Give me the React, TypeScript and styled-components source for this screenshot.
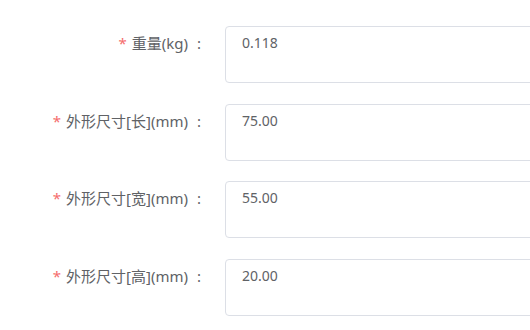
import React from 'react';
import styled, { createGlobalStyle } from 'styled-components';

const GlobalStyle = createGlobalStyle`
  html, body {
    margin: 0;
    padding: 0;
    background: #ffffff;
    overflow: hidden;
  }
  body {
    font-family: "Noto Sans", "Noto Sans CJK SC", sans-serif;
    font-size: 14px;
    color: #606266;
  }
`;

interface Field {
  label: string;
  value: string;
}

const fields: Field[] = [
  { label: '重量(kg)', value: '0.118' },
  { label: '外形尺寸[长](mm)', value: '75.00' },
  { label: '外形尺寸[宽](mm)', value: '55.00' },
  { label: '外形尺寸[高](mm)', value: '20.00' },
];

const App = () => {
  return (
    <>
      <GlobalStyle />
      <Form>
        {fields.map((f) => (
          <Row key={f.label}>
            <Label>
              <Required>*</Required>
              {f.label}
              <Colon>:</Colon>
            </Label>
            <Control>
              <TextArea defaultValue={f.value} rows={2} readOnly />
            </Control>
          </Row>
        ))}
      </Form>
    </>
  );
};

export default App;

const Form = styled.div`
  display: flex;
  flex-direction: column;
  gap: 20.7px;
  padding-top: 26px;
  width: 700px;
`;

const Row = styled.div`
  display: flex;
  align-items: flex-start;
`;

const Label = styled.label`
  width: 213px;
  box-sizing: border-box;
  padding: 6px 12px 0 0;
  text-align: right;
  line-height: 22px;
  font-size: 15px;
  color: #606266;
  white-space: nowrap;
`;

const Required = styled.span`
  color: #f56c6c;
  margin-right: 5px;
`;

const Colon = styled.span`
  margin-left: 9px;
`;

const Control = styled.div`
  margin-left: 12px;
  width: 400px;
`;

const TextArea = styled.textarea`
  display: block;
  width: 100%;
  height: 57px;
  box-sizing: border-box;
  padding: 5px 16px;
  border: 1px solid #dcdfe6;
  border-radius: 4px;
  font-family: "Noto Sans", "Noto Sans CJK SC", sans-serif;
  font-size: 14px;
  line-height: 21px;
  color: #606266;
  resize: none;
  outline: none;
  background: #fff;
`;
